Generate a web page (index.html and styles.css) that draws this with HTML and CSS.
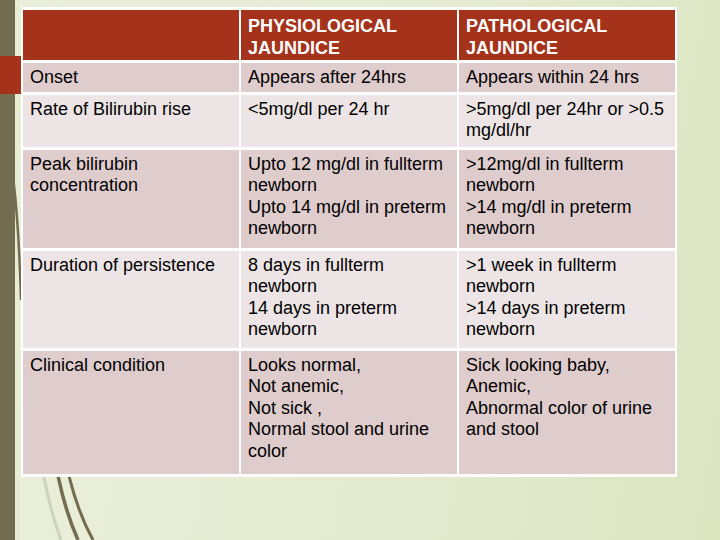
FILE: index.html
```html
<!DOCTYPE html>
<html>
<head>
<meta charset="utf-8">
<link rel="stylesheet" href="styles.css">
</head>
<body>
<div class="slide">
  <svg class="wisp" width="720" height="540" viewBox="0 0 720 540">
    <path d="M38 440 Q46 500 61 540" fill="none" stroke="#c3c6b0" stroke-width="3" opacity="0.7"/>
    <path d="M52 440 Q60 500 78 540" fill="none" stroke="#746c51" stroke-width="3.5"/>
    <path d="M62 440 Q71 500 93 540" fill="none" stroke="#746c51" stroke-width="3"/>
    <path d="M14 185 Q19 230 21 300" fill="none" stroke="#746c51" stroke-width="2.5"/>
  </svg>
  <div class="tab"></div>
  <table class="grid">
    <tr class="head">
      <th></th>
      <th>PHYSIOLOGICAL<br>JAUNDICE</th>
      <th>PATHOLOGICAL<br>JAUNDICE</th>
    </tr>
    <tr class="dark r-onset">
      <td>Onset</td>
      <td>Appears after 24hrs</td>
      <td>Appears within 24 hrs</td>
    </tr>
    <tr class="light r-rate">
      <td>Rate of Bilirubin rise</td>
      <td>&lt;5mg/dl per 24 hr</td>
      <td>&gt;5mg/dl per 24hr or &gt;0.5<br>mg/dl/hr</td>
    </tr>
    <tr class="dark r-peak">
      <td>Peak bilirubin<br>concentration</td>
      <td>Upto 12 mg/dl in fullterm<br>newborn<br>Upto 14 mg/dl in preterm<br>newborn</td>
      <td>&gt;12mg/dl in fullterm<br>newborn<br>&gt;14 mg/dl in preterm<br>newborn</td>
    </tr>
    <tr class="light r-dur">
      <td>Duration of persistence</td>
      <td>8 days in fullterm<br>newborn<br>14 days in preterm<br>newborn</td>
      <td>&gt;1 week in fullterm<br>newborn<br>&gt;14 days in preterm<br>newborn</td>
    </tr>
    <tr class="dark r-clin">
      <td>Clinical condition</td>
      <td>Looks normal,<br>Not anemic,<br>Not sick ,<br>Normal stool and urine<br>color</td>
      <td>Sick looking baby,<br>Anemic,<br>Abnormal color of urine<br>and stool</td>
    </tr>
  </table>
</div>
</body>
</html>
```
FILE: styles.css
```css
html, body {
  margin: 0;
  padding: 0;
}
body {
  width: 720px;
  height: 540px;
  overflow: hidden;
}
.slide {
  position: relative;
  width: 720px;
  height: 540px;
  box-sizing: border-box;
  padding: 7px 0 0 21px;
  background:
    linear-gradient(to right, #746c51 0, #746c51 15px, #e7ecd4 15px, #e7ecd4 20px, transparent 20px),
    linear-gradient(100deg, #eaefdb 0%, #e5ebd2 55%, #dae5c0 100%);
  font-family: "Liberation Sans", Arial, sans-serif;
}
.wisp {
  position: absolute;
  left: 0;
  top: 0;
}
.tab {
  position: absolute;
  left: 0;
  top: 56px;
  width: 21px;
  height: 38px;
  background: #a5321a;
}
.grid {
  position: relative;
  z-index: 1;
  width: 656px;
  table-layout: fixed;
  border-collapse: separate;
  border-spacing: 2px 3px;
  background: #ffffff;
  font-size: 18px;
}
.grid th,
.grid td {
  padding: 4px 7px 3px 7px;
  text-align: left;
  vertical-align: top;
  white-space: nowrap;
  line-height: 21.5px;
  color: #000;
  font-weight: normal;
}
.head th {
  background: #a5321a;
  color: #ffffff;
  font-weight: bold;
  padding-top: 6px;
  padding-bottom: 1px;
}
.head { height: 50px; }
.dark td { background: #dfcccc; }
.light td { background: #ede5e5; }
.r-onset { height: 28px; }
.r-rate { height: 52px; }
.r-peak { height: 98px; }
.r-dur { height: 97px; }
.r-clin { height: 123px; }
```
